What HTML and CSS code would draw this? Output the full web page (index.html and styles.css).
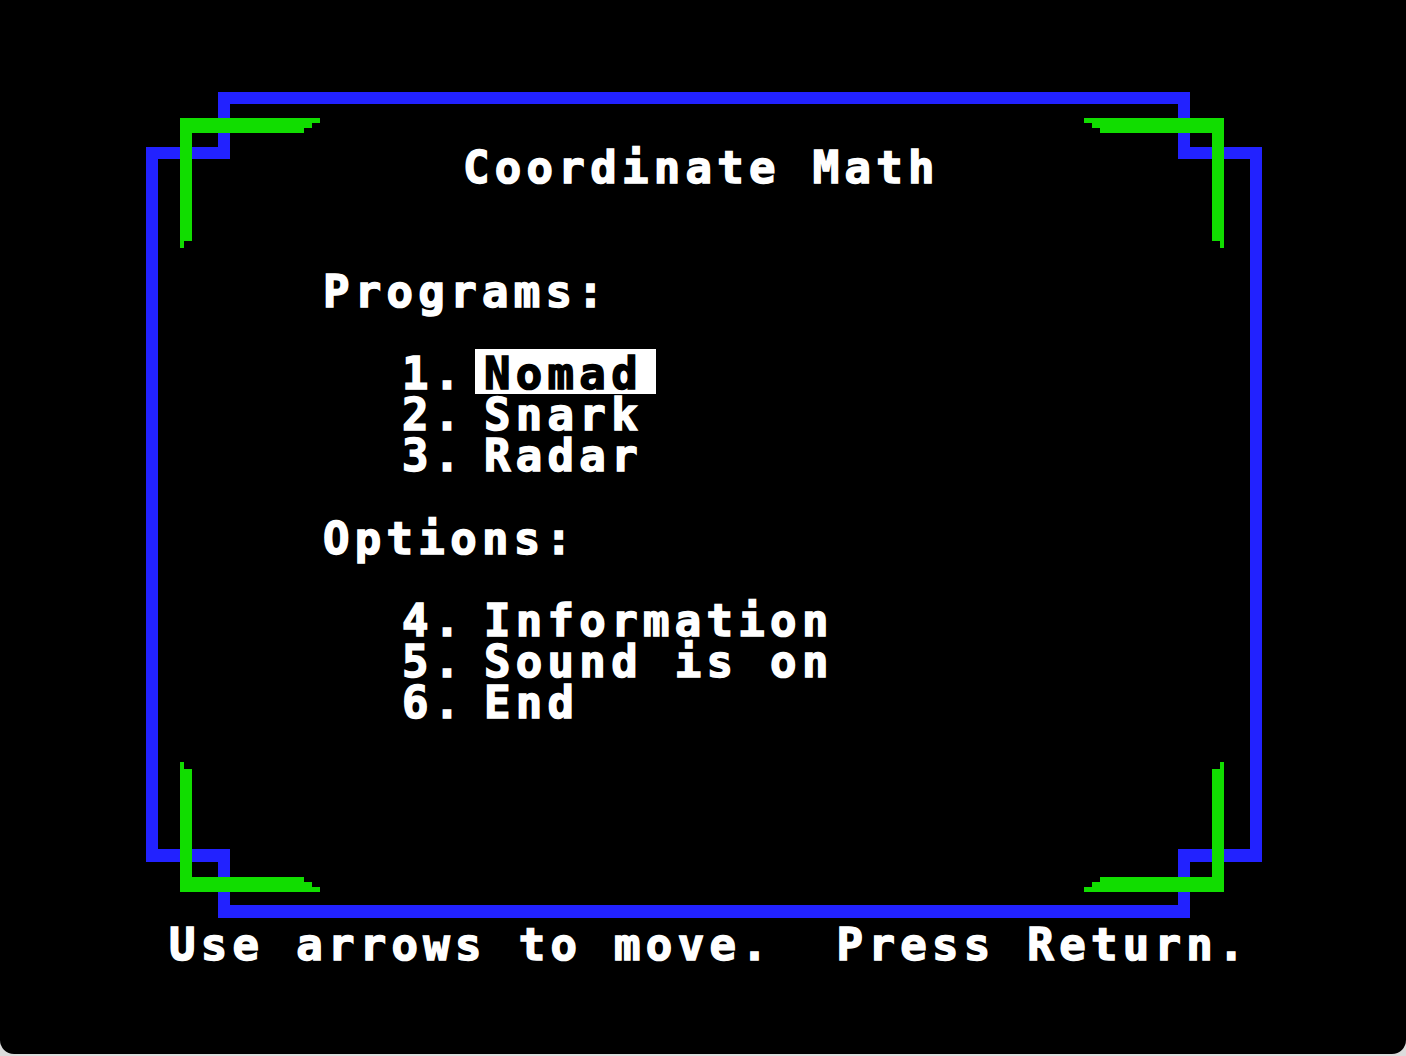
FILE: index.html
```html
<!DOCTYPE html>
<html lang="en">
<head>
<meta charset="utf-8">
<title>Coordinate Math</title>
<link rel="stylesheet" href="styles.css">
</head>
<body>
<div class="screen">
  <svg class="frame" width="1406" height="1054" viewBox="0 0 1406 1054" shape-rendering="crispEdges" aria-hidden="true">
    <path class="blue" d="M224 98 H1184 V153 H1256 V855.5 H1184 V911.5 H224 V855.5 H152 V153 H224 Z"/>
    <g class="green">
      <polygon id="gc" points="180,118 320,118 320,123 312,123 312,128 304,128 304,133 192,133 192,241 184,241 184,248 180,248"/>
      <use href="#gc" transform="matrix(-1 0 0 1 1404 0)"/>
      <use href="#gc" transform="matrix(1 0 0 -1 0 1010)"/>
      <use href="#gc" transform="matrix(-1 0 0 -1 1404 1010)"/>
    </g>
  </svg>
  <div class="menu">
    <div class="line title">Coordinate Math</div>
    <div class="spacer"></div>
    <div class="spacer"></div>
    <div class="line head">Programs:</div>
    <div class="spacer"></div>
    <div class="line item"><span class="num">1.</span><span class="sel">Nomad</span></div>
    <div class="line item"><span class="num">2.</span>Snark</div>
    <div class="line item"><span class="num">3.</span>Radar</div>
    <div class="spacer"></div>
    <div class="line head">Options:</div>
    <div class="spacer"></div>
    <div class="line item"><span class="num">4.</span>Information</div>
    <div class="line item"><span class="num">5.</span>Sound is on</div>
    <div class="line item"><span class="num">6.</span>End</div>
  </div>
  <div class="line prompt">Use arrows to move.  Press Return.</div>
</div>
</body>
</html>
```
FILE: styles.css
```css
html, body {
  margin: 0;
  background: #dcdcdc;
}

.screen {
  position: relative;
  z-index: 0;
  width: 1406px;
  height: 1054px;
  background: #000;
  border-radius: 0 0 14px 14px;
  overflow: hidden;
  font-family: "DejaVu Sans Mono", monospace;
  font-weight: bold;
  font-size: 44px;
  line-height: 41.2px;
  letter-spacing: 5.3px;
  color: #fff;
  -webkit-text-stroke: 1.5px currentColor;
}

.frame {
  position: absolute;
  left: 0;
  top: 0;
}

.blue {
  fill: none;
  stroke: #2222ff;
  stroke-width: 12.5;
  stroke-linejoin: miter;
}

.green {
  fill: #11dd00;
}

.menu {
  padding-top: 147px;
}

.line {
  height: 41.2px;
  white-space: pre;
}

.spacer {
  height: 41.2px;
}

.title {
  padding-left: 463px;
}

.head {
  padding-left: 323px;
}

.item {
  padding-left: 402px;
}

.num {
  display: inline-block;
  width: 82px;
}

.sel {
  display: inline-block;
  background: #fff;
  color: #000;
  line-height: 31px;
  padding: 8.5px 13px 5px 9px;
  margin: -8.5px -13px -5px -9px;
}

.prompt {
  margin-top: 200px;
  padding-left: 169px;
}
```
